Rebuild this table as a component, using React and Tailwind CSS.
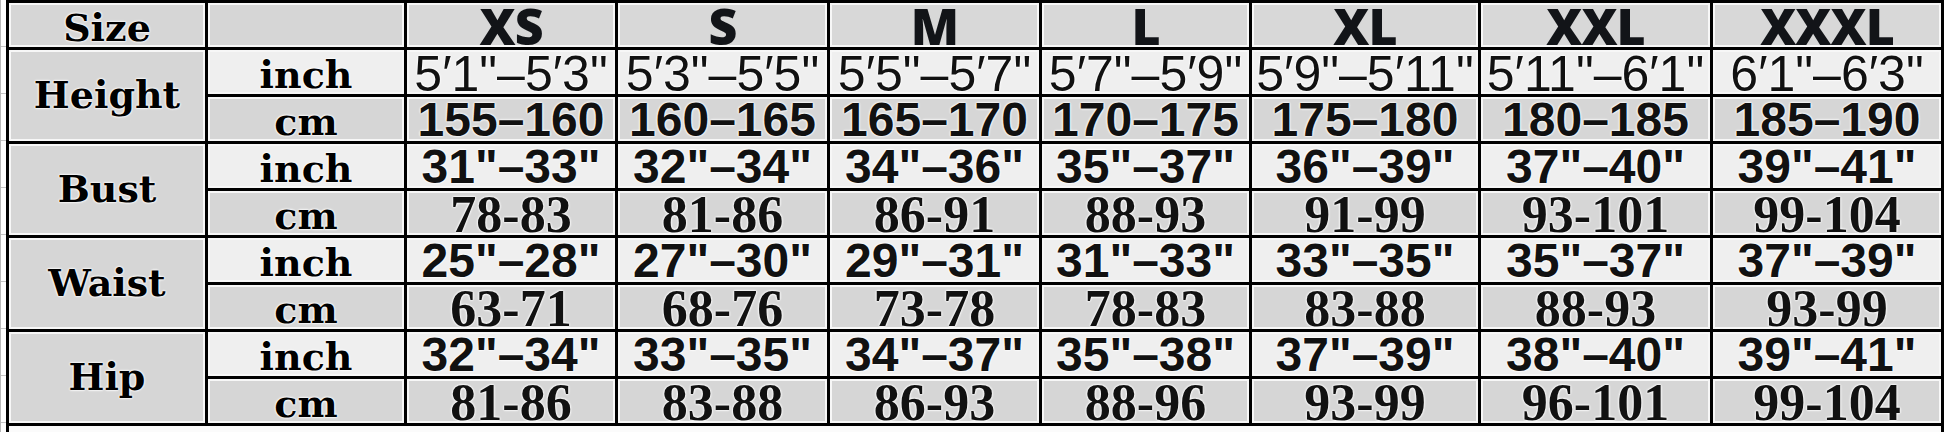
// Size chart table (garment measurements by size)
const SIZES = ['XS', 'S', 'M', 'L', 'XL', 'XXL', 'XXXL']

const ROWS = [
  {
    label: 'Height',
    inch: ['5′1"–5′3"', '5′3"–5′5"', '5′5"–5′7"', '5′7"–5′9"', '5′9"–5′11"', '5′11"–6′1"', '6′1"–6′3"'],
    cm: ['155–160', '160–165', '165–170', '170–175', '175–180', '180–185', '185–190'],
    serifCm: false,
  },
  {
    label: 'Bust',
    inch: ['31"–33"', '32"–34"', '34"–36"', '35"–37"', '36"–39"', '37"–40"', '39"–41"'],
    cm: ['78-83', '81-86', '86-91', '88-93', '91-99', '93-101', '99-104'],
    serifCm: true,
  },
  {
    label: 'Waist',
    inch: ['25"–28"', '27"–30"', '29"–31"', '31"–33"', '33"–35"', '35"–37"', '37"–39"'],
    cm: ['63-71', '68-76', '73-78', '78-83', '83-88', '88-93', '93-99'],
    serifCm: true,
  },
  {
    label: 'Hip',
    inch: ['32"–34"', '33"–35"', '34"–37"', '35"–38"', '37"–39"', '38"–40"', '39"–41"'],
    cm: ['81-86', '83-88', '86-93', '88-96', '93-99', '96-101', '99-104'],
    serifCm: true,
  },
]

const halo = '[text-shadow:0_0_2px_#fff,0_0_2px_#fff,0_0_3px_#fff]'
const slab = "font-['DejaVu_Serif','Liberation_Serif',serif] font-bold text-[38px] leading-[0.8] text-black"

function LabelCell({ children, className = '', bottom = false }) {
  return (
    <div className={`border-2 border-[#f7f7f7] flex justify-center ${bottom ? 'items-end pb-[2px]' : 'items-center'} ${className}`}>
      <span className={`${slab} ${halo}`}>{children}</span>
    </div>
  )
}

function UnitCell({ children, light }) {
  return (
    <div className={`border-2 border-[#f7f7f7] flex items-end justify-center pb-[2px] ${light ? 'bg-[#efefef]' : 'bg-[#d6d6d6]'}`}>
      <span className={`${slab} ${halo}`}>{children}</span>
    </div>
  )
}

function ValueCell({ value, light, variant }) {
  const font =
    variant === 'thin'
      ? "font-['Liberation_Sans',Arial,sans-serif] font-normal text-[50px]"
      : variant === 'serif'
      ? "font-['Liberation_Serif','Times_New_Roman',serif] font-bold text-[52px]"
      : "font-['Liberation_Sans',Arial,sans-serif] font-bold text-[48px]"
  return (
    <div className={`border-2 border-[#f7f7f7] flex items-center justify-center ${light ? 'bg-[#efefef]' : 'bg-[#d6d6d6]'}`}>
      <span className={`${font} leading-[0.8] whitespace-nowrap text-[#111] pt-[3px] ${halo}`}>{value}</span>
    </div>
  )
}

export default function App() {
  return (
    <div className="w-[1946px] h-[432px] overflow-hidden bg-white flex">
      {/* spreadsheet gridlines peeking out on the left */}
      <div className="w-[6px] h-full border-l border-[#b8b8b8] flex flex-col">
        {Array.from({ length: 10 }).map((_, i) => (
          <div key={i} className="h-[47px] flex-shrink-0 border-b border-[#c4c4c4]" />
        ))}
      </div>

      <div className="grid grid-cols-[196px_196px_208px_209px_209px_207px_226px_229px_228px] grid-rows-[repeat(9,44px)_40px] gap-[3px] bg-black p-[3px] h-fit">
        {/* header */}
        <LabelCell bottom className="bg-[#d6d6d6]">Size</LabelCell>
        <div className="border-2 border-[#f7f7f7] bg-[#d6d6d6]" />
        {SIZES.map(s => (
          <div key={s} className="border-2 border-[#f7f7f7] bg-[#d8d8d8] flex items-center justify-center">
            <span className="font-['Open_Sans','Liberation_Sans',sans-serif] font-extrabold text-[50px] leading-[0.8] text-[#121418] tracking-[-1px] pt-[2px]">
              {s}
            </span>
          </div>
        ))}

        {ROWS.map(row => (
          <Group key={row.label} row={row} />
        ))}

        {/* next (cut off) row */}
        <div className="col-span-9 bg-[#fbfbfb]" />
      </div>
    </div>
  )
}

function Group({ row }) {
  return (
    <>
      <LabelCell className="row-span-2 bg-[#d6d6d6]">{row.label}</LabelCell>
      <UnitCell light>inch</UnitCell>
      {row.inch.map((v, i) => (
        <ValueCell key={i} value={v} light variant={row.label === 'Height' ? 'thin' : 'sans'} />
      ))}
      <UnitCell>cm</UnitCell>
      {row.cm.map((v, i) => (
        <ValueCell key={i} value={v} variant={row.serifCm ? 'serif' : 'sans'} />
      ))}
    </>
  )
}
